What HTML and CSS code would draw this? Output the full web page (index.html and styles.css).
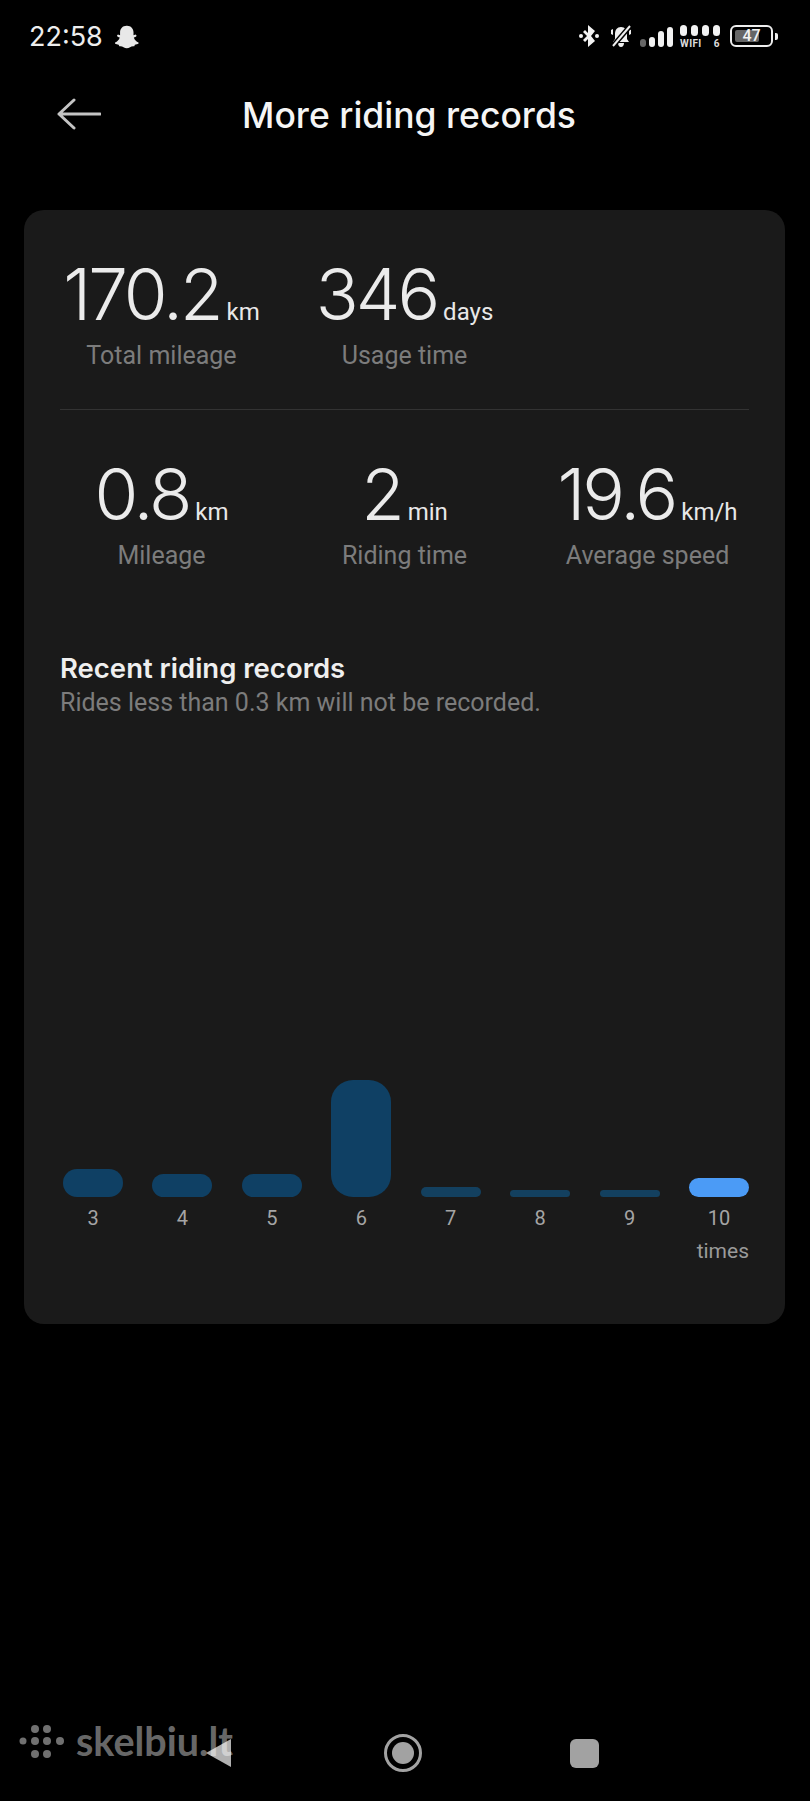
FILE: index.html
```html
<!DOCTYPE html>
<html lang="en">
<head>
<meta charset="utf-8">
<title>More riding records</title>
<link rel="stylesheet" href="styles.css">
</head>
<body>
<div class="screen">
  <header class="status">
    <div class="status-left">
      <span class="clock">22:58</span>
      <svg class="ghost" viewBox="0 0 24 24"><path d="M12 1.500c3.600 0 6 2.600 6 6.200v2.600l2-.6.9 1.100c-.5 1-1.600 1.300-2.600 1.700.6 2.200 2.300 3.800 4.300 4.500l.1 1c-1 .7-2.300.8-3.400 1.100l-.6 1.400c-1.500-.2-2.800 0-3.900.9-1.800 1.300-4.200 1.300-6 0-1.100-.9-2.400-1.100-3.900-.9l-.6-1.400c-1.100-.3-2.400-.4-3.400-1.100l.1-1c2-.7 3.700-2.300 4.300-4.500-1-.4-2.100-.7-2.600-1.700l.9-1.100 2 .6V7.700c0-3.600 2.400-6.200 6-6.200z"/></svg>
    </div>
    <div class="status-right">
      <svg class="ic-bt" viewBox="0 0 20 22"><path d="M9 0l7 6-4 5 4 5-7 6v-8l-3 3-2-2 4-4-4-4 2-2 3 3z"/><circle cx="2" cy="11" r="2"/><circle cx="18" cy="11" r="2"/></svg>
      <svg class="ic-bell" viewBox="0 0 22 22"><path d="M11 2c4 0 6 3 6 7v5l2 3H3l2-3V9c0-4 2-7 6-7zM8 18h6c0 2-1 4-3 4s-3-2-3-4z"/><path d="M1 5l2-1v6l-2-1zM21 5l-2-1v6l2-1z"/><path class="cut" d="M21 0L3 21"/><path class="slash" d="M20 1L3 21"/></svg>
      <div class="signal">
        <i class="sig s1"></i><i class="sig s2"></i><i class="sig s3"></i><i class="sig s4"></i>
      </div>
      <div class="wifi">
        <div class="wifi-dots"><i></i><i></i><i></i><i></i></div>
        <div class="wifi-text"><span>WIFI</span><span>6</span></div>
      </div>
      <div class="battery">
        <div class="batt-body"><i class="batt-level"></i><span class="batt-num">47</span></div>
        <i class="batt-nub"></i>
      </div>
    </div>
  </header>

  <nav class="topbar">
    <svg class="back" viewBox="0 0 44 32"><path d="M43 16H2M17 2L2 16l15 14"/></svg>
    <h1 class="title">More riding records</h1>
  </nav>

  <main class="card">
    <section class="stats stats-top">
      <div class="stat">
        <div class="value"><span class="num">170.2</span><span class="unit">km</span></div>
        <div class="label">Total mileage</div>
      </div>
      <div class="stat">
        <div class="value"><span class="num">346</span><span class="unit">days</span></div>
        <div class="label">Usage time</div>
      </div>
      <div class="stat"></div>
    </section>
    <hr class="divider">
    <section class="stats stats-bottom">
      <div class="stat">
        <div class="value"><span class="num">0.8</span><span class="unit">km</span></div>
        <div class="label">Mileage</div>
      </div>
      <div class="stat">
        <div class="value"><span class="num">2</span><span class="unit">min</span></div>
        <div class="label">Riding time</div>
      </div>
      <div class="stat">
        <div class="value"><span class="num">19.6</span><span class="unit">km/h</span></div>
        <div class="label">Average speed</div>
      </div>
    </section>
    <section class="recent">
      <h2 class="recent-title">Recent riding records</h2>
      <p class="recent-sub">Rides less than 0.3 km will not be recorded.</p>
    </section>
    <section class="chart">
      <div class="col"><div class="bar" style="height:28px"></div><span class="tick">3</span></div>
      <div class="col"><div class="bar" style="height:23px"></div><span class="tick">4</span></div>
      <div class="col"><div class="bar" style="height:23px"></div><span class="tick">5</span></div>
      <div class="col"><div class="bar bar-tall" style="height:117px"></div><span class="tick">6</span></div>
      <div class="col"><div class="bar bar-thin" style="height:10px"></div><span class="tick">7</span></div>
      <div class="col"><div class="bar bar-thin" style="height:7px"></div><span class="tick">8</span></div>
      <div class="col"><div class="bar bar-thin" style="height:7px"></div><span class="tick">9</span></div>
      <div class="col"><div class="bar bar-now" style="height:19px"></div><span class="tick">10</span></div>
    </section>
    <div class="axis-unit">times</div>
  </main>

  <footer class="navbar">
    <svg class="nav-back" viewBox="0 0 25 28"><path d="M25 0v28L0 14z"/></svg>
    <svg class="nav-home" viewBox="0 0 38 38"><circle class="ring" cx="19" cy="19" r="17.500"/><circle cx="19" cy="19" r="11"/></svg>
    <i class="nav-recent"></i>
  </footer>

  <div class="watermark">
    <svg class="wm-dots" viewBox="0 0 45 33"><circle cx="16" cy="4" r="4"/><circle cx="28" cy="4" r="4"/><circle cx="4" cy="16" r="3.500"/><circle cx="16" cy="16" r="4"/><circle cx="28" cy="16" r="4"/><circle cx="41" cy="16" r="4"/><circle cx="16" cy="29" r="4"/><circle cx="28" cy="29" r="4"/></svg>
    <span class="wm-text">skelbiu.lt</span>
  </div>
</div>
</body>
</html>
```

FILE: styles.css
```css
* { box-sizing: border-box; }
html, body { margin: 0; padding: 0; background: #000; }
body { font-family: Roboto, "Noto Sans", sans-serif; color: #f2f2f2; }

.screen { position: relative; width: 810px; height: 1801px; overflow: hidden; background: #000; }

/* status bar */
.status { height: 72px; display: flex; justify-content: space-between; align-items: flex-start; padding: 21px 32px 0 29px; }
.status-left { display: flex; align-items: center; gap: 11px; height: 32px; }
.clock { font-family: Inter, sans-serif; font-size: 27px; line-height: 32px; color: #eee; }
.ghost { width: 26px; height: 26px; fill: #e8e8e8; }
.status-right { display: flex; align-items: flex-start; height: 32px; padding-top: 4px; }
.ic-bt { width: 20px; height: 22px; fill: #f2f2f2; }
.ic-bell { width: 22px; height: 22px; fill: #eee; margin-left: 11px; }
.ic-bell .cut { fill: none; stroke: #000; stroke-width: 5; }
.ic-bell .slash { fill: none; stroke: #eee; stroke-width: 2; }
.signal { display: flex; align-items: flex-end; gap: 3px; height: 22px; margin-left: 8px; }
.sig { display: block; width: 6px; border-radius: 3px; background: #f2f2f2; }
.s1 { height: 8px; background: #666; }
.s2 { height: 10px; }
.s3 { height: 16px; }
.s4 { height: 20px; }
.wifi { width: 40px; margin-left: 7px; }
.wifi-dots { display: flex; justify-content: space-between; }
.wifi-dots i { display: block; width: 7px; height: 11px; border-radius: 4px; background: #f2f2f2; }
.wifi-text { display: flex; justify-content: space-between; font-size: 10px; line-height: 11px; font-weight: 700; margin-top: 2px; color: #ddd; letter-spacing: .4px; }
.battery { display: flex; align-items: center; margin-left: 10px; }
.batt-body { position: relative; width: 43px; height: 22px; border: 2px solid #eee; border-radius: 6px; display: flex; align-items: center; justify-content: center; }
.batt-level { position: absolute; left: 3px; top: 3px; bottom: 3px; width: 24px; background: #666; border-radius: 2px; }
.batt-num { position: relative; font-size: 16px; line-height: 18px; font-weight: 500; color: #f2f2f2; }
.batt-nub { display: block; width: 3px; height: 7px; margin-left: 2px; background: #eee; border-radius: 0 2px 2px 0; }

/* top bar */
.topbar { position: relative; height: 138px; display: flex; justify-content: center; align-items: flex-start; padding-top: 19px; }
.back { position: absolute; left: 57px; top: 26px; width: 44px; height: 32px; fill: none; stroke: #c4c4c4; stroke-width: 3; stroke-linecap: round; stroke-linejoin: round; }
.title { margin: 0 0 0 8px; font-family: Inter, sans-serif; font-size: 35.500px; line-height: 50px; font-weight: 500; color: #f5f5f5; }

/* card */
.card { margin: 0 25px 0 24px; height: 1114px; padding: 46px 16px 0; background: #1a1a1a; border-radius: 20px; }
.stats { display: grid; grid-template-columns: repeat(3, 1fr); }
.stat { display: flex; flex-direction: column; align-items: center; }
.value { display: flex; align-items: baseline; height: 76px; }
.num { font-family: Inter, sans-serif; font-size: 71px; line-height: 76px; font-weight: 350; letter-spacing: -3px; color: #ebebeb; }
.unit { margin-left: 6px; font-size: 24px; line-height: 28px; color: #e8e8e8; }
.label { font-size: 25px; line-height: 32px; color: #7c7c7c; margin-top: 8px; }
.divider { margin: 37px 20px 46px; border: 0; border-top: 1px solid #333; }
.recent { margin: 78px 20px 0; }
.recent-title { margin: 0; font-family: Inter, sans-serif; font-size: 27.500px; line-height: 37px; font-weight: 600; color: #efefef; }
.recent-sub { margin: 0; font-size: 25px; line-height: 32px; color: #7c7c7c; }
.chart { display: flex; justify-content: space-between; align-items: flex-end; margin: 274px 20px 0 23px; height: 238px; }
.col { display: flex; flex-direction: column; align-items: center; width: 60px; }
.bar { width: 60px; background: #0f4064; border-radius: 14px; }
.bar-tall { border-radius: 22px; }
.bar-thin { border-radius: 5px; background: #13405f; }
.bar-now { border-radius: 10px; background: #4b9bf6; }
.tick { margin-top: 8px; font-size: 20px; line-height: 26px; color: #a5a5a5; height: 26px; }
.axis-unit { margin: 6px 20px 0 0; text-align: right; font-size: 21px; line-height: 28px; color: #9a9a9a; }

/* bottom nav */
.navbar { position: absolute; left: 0; right: 0; bottom: 29px; height: 38px; }
.nav-back { position: absolute; left: 206px; top: 5px; width: 25px; height: 28px; fill: #b0b0b0; }
.nav-home { position: absolute; left: 384px; top: 0; width: 38px; height: 38px; fill: #a2a2a2; }
.nav-home .ring { fill: none; stroke: #a2a2a2; stroke-width: 3; }
.nav-recent { position: absolute; left: 570px; top: 5px; display: block; width: 29px; height: 29px; border-radius: 6px; background: #a2a2a2; }

/* watermark */
.watermark { position: absolute; left: 19px; top: 1724px; display: flex; align-items: center; gap: 12px; }
.wm-dots { width: 45px; height: 33px; fill: rgba(255, 255, 255, .44); }
.wm-text { font-family: Lato, sans-serif; font-size: 39.500px; line-height: 34px; font-weight: 700; color: rgba(255, 255, 255, .42); }
```
